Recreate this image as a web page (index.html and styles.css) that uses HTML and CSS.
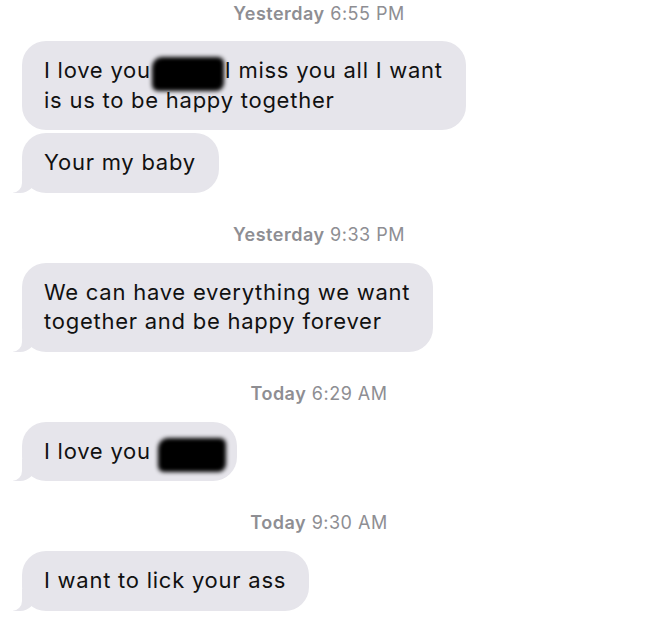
FILE: index.html
```html
<!DOCTYPE html>
<html lang="en">
<head>
    <meta charset="UTF-8">
    <meta name="viewport" content="width=device-width, initial-scale=1.0">
    <title>Messages</title>
    <link rel="stylesheet" href="styles.css">
</head>
<body>

<div class="thread">
    <div class="stamp first"><b>Yesterday</b> 6:55 PM</div>
    <div class="bubble">I love you<span class="redact"></span>I miss you all I want<br>is us to be happy together</div>
    <div class="bubble tail">Your my baby</div>

    <div class="stamp"><b>Yesterday</b> 9:33 PM</div>
    <div class="bubble tail">We can have everything we want<br>together and be happy forever</div>

    <div class="stamp"><b>Today</b> 6:29 AM</div>
    <div class="bubble tail">I love you <span class="redact wide"></span></div>

    <div class="stamp"><b>Today</b> 9:30 AM</div>
    <div class="bubble tail">I want to lick your ass</div>
</div>

</body>
</html>
```

FILE: styles.css
```css
body {
    margin: 0;
    background-color: #fff;
    font-family: Inter, "Liberation Sans", Arial, sans-serif;
    color: #111;
}
.thread {
    display: flex;
    flex-direction: column;
    align-items: flex-start;
    padding: 0 0 0 22px;
}
.stamp {
    align-self: stretch;
    text-align: center;
    padding-right: 34px;
    font-size: 18px;
    letter-spacing: 0.5px;
    line-height: 20px;
    color: #8e8e93;
    margin: 32px 0 18px;
}
.stamp.first {
    margin-top: 4px;
    margin-bottom: 17px;
}
.stamp b {
    font-weight: 600;
}
.bubble {
    position: relative;
    background-color: #e6e5eb;
    border-radius: 24px;
    padding: 15px 23px 15px 22px;
    font-size: 22px;
    letter-spacing: 0.75px;
    line-height: 29.5px;
    white-space: nowrap;
}
.bubble + .bubble {
    margin-top: 3px;
}
.bubble.tail::before {
    content: "";
    position: absolute;
    bottom: 0;
    left: -9px;
    width: 23px;
    height: 22px;
    background-color: #e6e5eb;
    border-bottom-right-radius: 16px;
}
.bubble.tail::after {
    content: "";
    position: absolute;
    bottom: 0;
    left: -11px;
    width: 11px;
    height: 22px;
    background-color: #fff;
    border-bottom-right-radius: 10px;
}
.redact {
    display: inline-block;
    width: 72px;
    height: 34px;
    margin: -6px 1px -6px 1px;
    vertical-align: -7px;
    background-color: #000;
    border-radius: 10px 6px 8px 6px;
    filter: blur(2px);
}
.redact.wide {
    width: 68px;
    margin: -6px -12px -6px 0;
}
```
